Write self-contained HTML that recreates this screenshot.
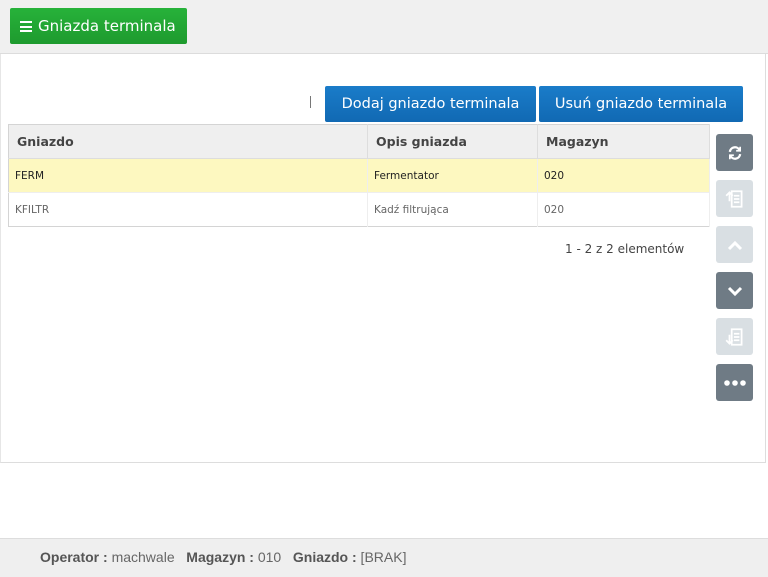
<!DOCTYPE html>
<html><head><meta charset="utf-8"><style>
*{box-sizing:border-box;margin:0;padding:0}
body{width:768px;height:577px;background:#fff;font-family:"DejaVu Sans","Liberation Sans",sans-serif;position:relative;overflow:hidden}
.top{position:absolute;left:0;top:0;width:768px;height:54px;background:#f0f0f0;border-bottom:1px solid #dcdcdc}
.green{position:absolute;left:10px;top:8px;width:177px;height:36px;background:linear-gradient(#27b23a,#1e9a2e);border-radius:2px;color:#fff;font-size:15px;line-height:36px;padding-left:10px}
.green .ham{display:inline-block;width:12px;height:11px;border-top:2px solid #fff;border-bottom:2px solid #fff;position:relative;vertical-align:-1px;margin-right:6px}
.green .ham:after{content:"";position:absolute;left:0;right:0;top:2.5px;border-top:2px solid #fff}
.main{position:absolute;left:0;top:54px;width:766px;height:409px;border-right:1px solid #ddd;border-bottom:1px solid #ddd;border-left:1px solid #e6e6e6}
.blue{position:absolute;top:86px;height:36px;background:linear-gradient(#1a7cc9,#1169b3);color:#fff;font-size:14.5px;line-height:36px;text-align:center;border-radius:2px}
.cursor{position:absolute;left:310px;top:96px;width:1px;height:12px;background:#777}
table{position:absolute;left:8px;top:124px;width:702px;border-collapse:collapse;border:1px solid #d4d4d4;font-size:10.5px}
th{background:#efefef;height:34px;text-align:left;padding-left:8px;font-size:12.5px;color:#444;border-right:1px solid #ddd;border-bottom:1px solid #ddd}
td{height:34px;padding-left:6px;border-right:1px solid #eee;color:#666}
tr.sel td{background:#fdf8c0;color:#222;border-bottom:1px solid #eee}
.pg{position:absolute;left:565px;top:242px;font-size:12px;color:#444}
.sb{position:absolute;left:716px;width:37px;height:37px;border-radius:3px;display:flex;align-items:center;justify-content:center}
.dk{background:#6f7b85}.lt{background:#d9dfe3}
.foot{position:absolute;left:0;top:538px;width:768px;height:39px;background:#efefef;border-top:1px solid #ddd;font-family:"Liberation Sans Narrow","Liberation Sans",sans-serif;font-size:14px;color:#666;padding:10px 0 0 40px}
.foot b{color:#555}
</style></head><body>
<div class="top"><div class="green"><span class="ham"></span>Gniazda terminala</div></div>
<div class="main"></div>
<div class="cursor"></div>
<div class="blue" style="left:325px;width:211px">Dodaj gniazdo terminala</div>
<div class="blue" style="left:539px;width:204px">Usuń gniazdo terminala</div>
<table>
<tr><th style="width:359px">Gniazdo</th><th style="width:170px">Opis gniazda</th><th>Magazyn</th></tr>
<tr class="sel"><td>FERM</td><td>Fermentator</td><td>020</td></tr>
<tr><td>KFILTR</td><td>Kadź filtrująca</td><td>020</td></tr>
</table>
<div class="pg">1 - 2 z 2 elementów</div>
<div class="sb dk" style="top:134px"><svg width="16" height="16" viewBox="0 0 14 14" fill="none" stroke="#fff" stroke-width="2"><path d="M2.5 6A4.5 4.5 0 0 1 11 4.5M11.5 8A4.5 4.5 0 0 1 3 9.5"/><path d="M11.5 1.5v3.5h-3.5M2.5 12.5v-3.5h3.5" stroke-width="1.5"/></svg></div>
<div class="sb lt" style="top:180px"><svg width="22" height="22" viewBox="0 0 20 20" fill="none" stroke="#fff" stroke-width="1.6"><path d="M7 3h9v14H7zM9 7h5M9 10h5M9 13h5M2 7l3-3 3 3M5 4v8"/></svg></div>
<div class="sb lt" style="top:226px"><svg width="16" height="12" viewBox="0 0 16 12" fill="none" stroke="#fff" stroke-width="3"><path d="M2 10l6-6 6 6"/></svg></div>
<div class="sb dk" style="top:272px"><svg width="16" height="12" viewBox="0 0 16 12" fill="none" stroke="#fff" stroke-width="3"><path d="M2 3l6 6 6-6"/></svg></div>
<div class="sb lt" style="top:318px"><svg width="22" height="22" viewBox="0 0 20 20" fill="none" stroke="#fff" stroke-width="1.6"><path d="M7 3h9v14H7zM9 7h5M9 10h5M9 13h5M2 13l3 3 3-3M5 16V8"/></svg></div>
<div class="sb dk" style="top:364px"><svg width="22" height="6" viewBox="0 0 22 6" fill="#fff"><circle cx="3" cy="3" r="2.8"/><circle cx="11" cy="3" r="2.8"/><circle cx="19" cy="3" r="2.8"/></svg></div>
<div class="foot"><b>Operator :</b> machwale &nbsp; <b>Magazyn :</b> 010 &nbsp; <b>Gniazdo :</b> [BRAK]</div>
</body></html>
